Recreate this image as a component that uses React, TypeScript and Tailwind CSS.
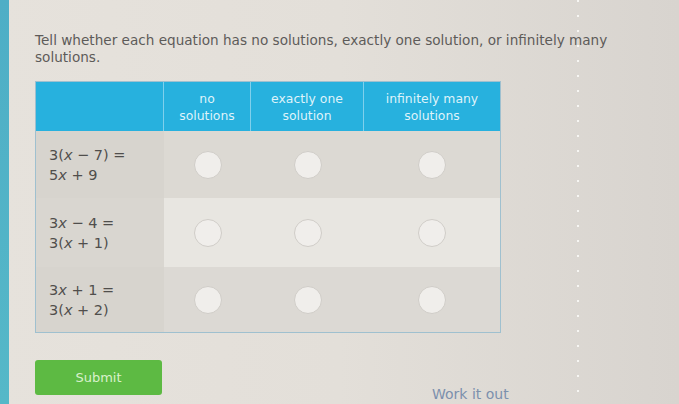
import React from 'react'

const ROWS = [
  { a: <>3(<i>x</i> − 7) =</>, b: <>5<i>x</i> + 9</>, h: 'h-[67px]', cell: 'bg-[#dcd9d3]', first: 'bg-[#d7d4ce]' },
  { a: <>3<i>x</i> − 4 =</>, b: <>3(<i>x</i> + 1)</>, h: 'h-[69px]', cell: 'bg-[#e8e6e1]', first: 'bg-[#d9d6d0]' },
  { a: <>3<i>x</i> + 1 =</>, b: <>3(<i>x</i> + 2)</>, h: 'h-[65px]', cell: 'bg-[#dcd9d4]', first: 'bg-[#d7d4ce]' }
]

function Radio() {
  return <span className="block w-[28px] h-[28px] rounded-full bg-[#f0eeeb] border border-[#d0cdc8]" />
}

export default function App() {
  return (
    <div
      className="relative flex w-[679px] h-[404px] overflow-hidden bg-gradient-to-r from-[#e6e2dc] via-[#e3dfd9] to-[#d8d4cf]"
      style={{ fontFamily: '"DejaVu Sans", Verdana, sans-serif' }}
    >
      {/* teal edge */}
      <div className="w-[9px] shrink-0 bg-gradient-to-b from-[#4eaec6] to-[#55b8c8]" />

      <div className="flex flex-col pl-[26px] pt-[32px]">
        <p className="w-[600px] text-[13.6px] leading-[17px] text-[#5d5b59]">
          Tell whether each equation has no solutions, exactly one solution, or infinitely many solutions.
        </p>

        {/* table */}
        <div className="mt-[15px] w-[466px] border border-[#9fc0cf]">
          <div className="grid grid-cols-[128px_87px_113px_136px] h-[49px] bg-[#27b1de] text-[12.4px] leading-[17px] text-[#dff3fa] text-center">
            <div className="border-r border-[#7fd0ec]" />
            <div className="flex items-center justify-center border-r border-[#7fd0ec]">no<br />solutions</div>
            <div className="flex items-center justify-center border-r border-[#7fd0ec]">exactly one<br />solution</div>
            <div className="flex items-center justify-center">infinitely many<br />solutions</div>
          </div>
          {ROWS.map((r, i) => (
            <div key={i} className={`grid grid-cols-[128px_87px_113px_136px] ${r.h}`}>
              <div className={`flex flex-col justify-center pl-[13px] text-[14.5px] leading-[20px] text-[#504e4c] whitespace-pre ${r.first}`}>
                <span>{r.a}</span>
                <span>{r.b}</span>
              </div>
              <div className={`flex items-center justify-center ${r.cell}`}><Radio /></div>
              <div className={`flex items-center justify-center ${r.cell}`}><Radio /></div>
              <div className={`flex items-center justify-center ${r.cell}`}><Radio /></div>
            </div>
          ))}
        </div>

        <div className="mt-[27px] flex">
          <button className="w-[127px] h-[35px] rounded-[3px] bg-[#5dba43] text-[13px] text-[#d9f1cc]">
            Submit
          </button>
        </div>
        <div className="-mt-[9px] pl-[397px] text-[14px] leading-[17px] text-[#7c90ad]">Work it out</div>
      </div>

      {/* dotted guide line */}
      <div className="absolute left-[577px] top-0 h-full w-[2px] bg-[repeating-linear-gradient(to_bottom,#f7f6f3_0px,#f7f6f3_2px,transparent_2px,transparent_15px)]" />
    </div>
  )
}
